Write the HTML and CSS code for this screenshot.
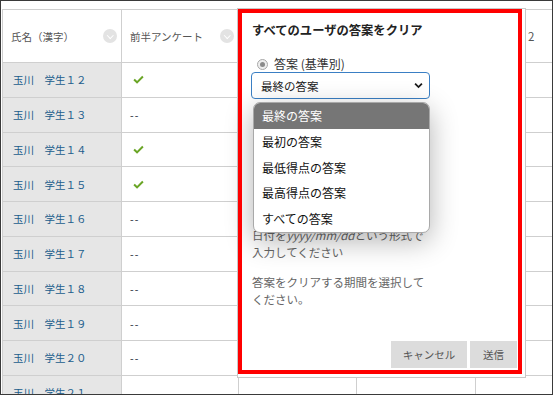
FILE: index.html
```html
<!DOCTYPE html>
<html lang="ja">
<head>
    <meta charset="UTF-8">
    <title>答案のクリア</title>
    <link rel="stylesheet" href="styles.css">
</head>
<body>
<div class="screen">

    <!-- 受講者一覧 -->
    <div class="grid">
        <div class="cell head"><span>氏名（漢字）</span><i class="sort"></i></div>
        <div class="cell head"><span>前半アンケート</span><i class="sort"></i></div>
        <div class="cell head"></div>
        <div class="cell head"></div>
        <div class="cell head tail"><span>2</span></div>

        <div class="cell name">玉川　学生１２</div><div class="cell"><svg class="check" viewBox="0 0 12 9"><path d="M1.2 4.6 L4.4 7.6 L10.8 1.2"/></svg></div><div class="cell"></div><div class="cell"></div><div class="cell"></div>
        <div class="cell name">玉川　学生１３</div><div class="cell dash">--</div><div class="cell"></div><div class="cell"></div><div class="cell"></div>
        <div class="cell name">玉川　学生１４</div><div class="cell"><svg class="check" viewBox="0 0 12 9"><path d="M1.2 4.6 L4.4 7.6 L10.8 1.2"/></svg></div><div class="cell"></div><div class="cell"></div><div class="cell"></div>
        <div class="cell name">玉川　学生１５</div><div class="cell"><svg class="check" viewBox="0 0 12 9"><path d="M1.2 4.6 L4.4 7.6 L10.8 1.2"/></svg></div><div class="cell"></div><div class="cell"></div><div class="cell"></div>
        <div class="cell name">玉川　学生１６</div><div class="cell dash">--</div><div class="cell"></div><div class="cell"></div><div class="cell"></div>
        <div class="cell name">玉川　学生１７</div><div class="cell dash">--</div><div class="cell"></div><div class="cell"></div><div class="cell"></div>
        <div class="cell name">玉川　学生１８</div><div class="cell dash">--</div><div class="cell"></div><div class="cell"></div><div class="cell"></div>
        <div class="cell name">玉川　学生１９</div><div class="cell dash">--</div><div class="cell"></div><div class="cell"></div><div class="cell"></div>
        <div class="cell name">玉川　学生２０</div><div class="cell dash">--</div><div class="cell"></div><div class="cell"></div><div class="cell"></div>
        <div class="cell name">玉川　学生２１</div><div class="cell"></div><div class="cell"></div><div class="cell"></div><div class="cell"></div>
    </div>

    <!-- ダイアログ -->
    <div class="dialog">
        <h3 class="dialog-title">すべてのユーザの答案をクリア</h3>

        <label class="radio-row"><span class="radio"></span>答案 (基準別)</label>
        <div class="select">
            <span>最終の答案</span>
            <svg class="chevron" viewBox="0 0 10 7"><path d="M1.2 1.4 L5 5.2 L8.8 1.4"/></svg>
        </div>

        <p class="hint first">日付を<i>yyyy/mm/dd</i>という形式で<br>入力してください</p>
        <p class="hint">答案をクリアする期間を選択して<br>ください。</p>

        <div class="dialog-footer">
            <button class="btn btn-cancel">キャンセル</button>
            <button class="btn btn-send">送信</button>
        </div>

        <!-- 開いている選択肢 -->
        <ul class="options">
            <li class="active">最終の答案</li>
            <li>最初の答案</li>
            <li>最低得点の答案</li>
            <li>最高得点の答案</li>
            <li>すべての答案</li>
        </ul>

        <div class="mark"></div>
    </div>

</div>
</body>
</html>
```

FILE: styles.css
```css
/* 全体 */
body {
    margin: 0;
    background: #fff;
    font-family: "Noto Sans CJK JP", "Noto Sans", sans-serif;
}

.screen {
    position: relative;
    width: 553px;
    height: 395px;
    box-sizing: border-box;
    border: 1px solid #3a3a3a;
    overflow: hidden;
    background: #fff;
}

/* 一覧表 */
.grid {
    display: grid;
    grid-template-columns: 119px 117px 118px 119px 119px;
    grid-template-rows: 53px;
    grid-auto-rows: 34.75px;
    margin: 8px 0 0 1px;
    border-top: 1px solid #cfcfcf;
    border-left: 1px solid #cfcfcf;
    width: max-content;
}

.cell {
    display: flex;
    align-items: center;
    box-sizing: border-box;
    border-right: 1px solid #cfcfcf;
    border-bottom: 1px solid #cfcfcf;
    padding-left: 8px;
    font-size: 10.5px;
    color: #1c2a38;
    white-space: nowrap;
}

.cell.head {
    justify-content: space-between;
    padding-right: 4px;
    color: #555;
}

.cell.head.tail {
    justify-content: flex-start;
    padding-left: 52px;
    font-size: 11.5px;
}

.cell.name {
    padding-left: 10px;
    background: #e6e6e6;
    color: #215d8c;
}

.cell.dash {
    letter-spacing: 1px;
}

.sort {
    position: relative;
    width: 14px;
    height: 14px;
    border-radius: 50%;
    background: #e3e3e3;
    flex-shrink: 0;
}

.sort::after {
    content: "";
    position: absolute;
    left: 4.5px;
    top: 3.5px;
    width: 3.5px;
    height: 3.5px;
    border-right: 1.6px solid #fff;
    border-bottom: 1.6px solid #fff;
    transform: rotate(45deg);
}

.check {
    width: 11px;
    height: 9px;
    margin-left: 3px;
}

.check path {
    fill: none;
    stroke: #6aa526;
    stroke-width: 2.2;
}

/* ダイアログ */
.dialog {
    position: absolute;
    left: 236px;
    top: 7px;
    width: 289px;
    height: 370px;
    box-sizing: border-box;
    border: 1px solid #c8c8c8;
    background: #fff;
    padding: 13px 8px 9px 14px;
    display: flex;
    flex-direction: column;
}

.dialog-title {
    margin: 0;
    font-size: 12.3px;
    line-height: 17px;
    font-weight: bold;
    color: #222;
}

.radio-row {
    display: flex;
    align-items: center;
    height: 16px;
    margin-top: 16px;
    padding-left: 5px;
    font-size: 12px;
    color: #333;
}

.radio {
    position: relative;
    width: 11px;
    height: 11px;
    box-sizing: border-box;
    margin: 2px 6px 0 0;
    border-radius: 50%;
    border: 1px solid #a8a8a8;
    background: #eee;
}

.radio::after {
    content: "";
    position: absolute;
    left: 2px;
    top: 2px;
    width: 5px;
    height: 5px;
    border-radius: 50%;
    background: #8a8a8a;
}

.select {
    display: flex;
    align-items: center;
    justify-content: space-between;
    width: 179px;
    height: 27px;
    box-sizing: border-box;
    margin: 1px 0 0 -1px;
    padding: 0 6px 0 9px;
    border: 1px solid #3a7fc4;
    border-radius: 4px;
    font-size: 11.5px;
    color: #222;
}

.chevron {
    width: 9px;
    height: 7px;
}

.chevron path {
    fill: none;
    stroke: #1a1a1a;
    stroke-width: 2;
}

.hint {
    margin: 0;
    font-size: 11.5px;
    line-height: 16.5px;
    color: #666;
}

/* 選択肢の下に期間指定の欄がある */
.hint.first {
    margin-top: 128px;
}

.hint + .hint {
    margin-top: 14px;
}

.dialog-footer {
    display: flex;
    justify-content: flex-end;
    gap: 3px;
    margin-top: auto;
}

.btn {
    height: 27px;
    border: none;
    background: #dcdcdc;
    color: #555;
    font-family: inherit;
    font-size: 10.5px;
    padding: 0;
}

.btn-cancel {
    width: 76px;
}

.btn-send {
    width: 47px;
}

/* 開いたプルダウン */
.options {
    position: absolute;
    left: 15px;
    top: 93px;
    width: 177px;
    margin: 0;
    padding: 0;
    list-style: none;
    box-sizing: border-box;
    border: 1px solid #a9a9a9;
    border-radius: 7px;
    overflow: hidden;
    background: #fff;
    box-shadow: 0 8px 28px rgba(0, 0, 0, 0.3);
}

.options li {
    height: 25.8px;
    line-height: 25.8px;
    padding-left: 8px;
    font-size: 12px;
    color: #111;
}

.options li.active {
    background: #767676;
    color: #fff;
}

/* 赤枠の注記 */
.mark {
    position: absolute;
    left: 0;
    top: 0;
    width: 284px;
    height: 365px;
    box-sizing: border-box;
    border: 4px solid #f00;
    pointer-events: none;
}
```
